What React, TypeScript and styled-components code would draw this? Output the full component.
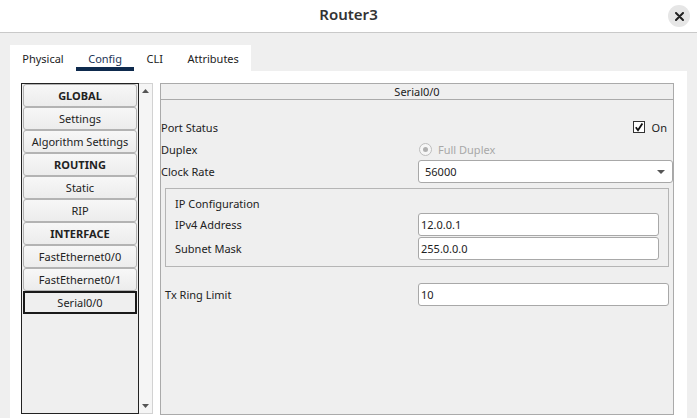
import React from 'react';
import styled, { createGlobalStyle } from 'styled-components';

const Global = createGlobalStyle`
  html, body { margin: 0; padding: 0; }
  body {
    background: #efefef;
    font-family: "Noto Sans", "Open Sans", sans-serif;
    font-size: 11px;
    color: #222;
  }
  * { box-sizing: border-box; }
`;

const Window = styled.div`
  width: 697px;
  height: 418px;
  display: flex;
  flex-direction: column;
  background: #efefef;
  overflow: hidden;
`;

const TitleBar = styled.header`
  height: 33px;
  flex: none;
  background: #fff;
  border-bottom: 1px solid #c9c9c9;
  display: grid;
  grid-template-columns: 1fr auto 1fr;
  align-items: center;
  padding: 0 7px 5px;
`;

const Title = styled.h1`
  grid-column: 2;
  margin: 0;
  font-size: 15px;
  font-weight: 600;
  color: #333;
  line-height: 20px;
`;

const CloseButton = styled.button`
  grid-column: 3;
  justify-self: end;
  width: 22px;
  height: 22px;
  border-radius: 50%;
  border: none;
  background: #e6e6e6;
  display: flex;
  align-items: center;
  justify-content: center;
  padding: 0;
  margin-top: 5px;
`;

const Body = styled.div`
  flex: 1;
  display: flex;
  flex-direction: column;
  padding: 12px 10px 0;
  min-height: 0;
`;

const TabBar = styled.nav`
  align-self: flex-start;
  display: flex;
  background: #fff;
  height: 26px;
`;

const Tab = styled.div<{ $active?: boolean }>`
  padding: 4px 12.25px 0;
  display: flex;
  align-items: center;
  height: 100%;
  color: ${(p) => (p.$active ? '#1d3557' : '#222')};
  border-bottom: 4px solid ${(p) => (p.$active ? '#0e2a4d' : 'transparent')};
`;

const Page = styled.div`
  flex: 1;
  background: #fff;
  display: flex;
  padding: 12px 13px 3px 11px;
  min-height: 0;
`;

const Sidebar = styled.div`
  display: flex;
  margin-right: 7px;
  margin-bottom: 1px;
`;

const ListBox = styled.div`
  width: 118px;
  border: 1px solid #222;
  background: #efefef;
  padding: 0 1px;
  display: flex;
  flex-direction: column;
`;

const ListItem = styled.div<{ $header?: boolean; $selected?: boolean }>`
  height: 23px;
  display: flex;
  align-items: center;
  justify-content: center;
  font-weight: ${(p) => (p.$header ? 700 : 400)};
  border: ${(p) => (p.$selected ? '2px solid #1a1a1a' : '1px solid #b3b3b3')};
  border-radius: ${(p) => (p.$selected ? '0' : '3px')};
  background: ${(p) => (p.$selected ? '#efefef' : 'linear-gradient(#f7f7f7, #ececec)')};
  color: #222;
  white-space: nowrap;
`;

const ScrollBar = styled.div`
  width: 14px;
  background: #f5f5f5;
  border: 1px solid #d2d2d2;
  border-left: none;
  display: flex;
  flex-direction: column;
  justify-content: space-between;
`;

const ScrollArrow = styled.div`
  height: 14px;
  display: flex;
  align-items: center;
  justify-content: center;
`;

const Detail = styled.section`
  flex: 1;
  border: 1px solid #aaa;
  background: #efefef;
  display: flex;
  flex-direction: column;
`;

const DetailHeader = styled.div`
  height: 16px;
  border-bottom: 1px solid #aaa;
  text-align: center;
  line-height: 15px;
  color: #222;
`;

const DetailContent = styled.div`
  padding-top: 16px;
  display: flex;
  flex-direction: column;
`;

const FormRow = styled.div<{ $labelWidth: number; $height?: number }>`
  display: grid;
  grid-template-columns: ${(p) => p.$labelWidth}px 1fr;
  align-items: center;
  height: ${(p) => p.$height ?? 22}px;
`;

const Label = styled.span`
  color: #222;
  white-space: nowrap;
`;

const CheckWrap = styled.div`
  justify-self: end;
  display: flex;
  align-items: center;
  gap: 7px;
  padding-right: 6px;
`;

const CheckBox = styled.span`
  width: 12px;
  height: 12px;
  background: #fff;
  border: 1px solid #333;
  display: flex;
  align-items: center;
  justify-content: center;
`;

const RadioWrap = styled.div`
  display: flex;
  align-items: center;
  gap: 6px;
  color: #a8a8a8;
  padding-left: 1px;
`;

const Radio = styled.span`
  width: 13px;
  height: 13px;
  border-radius: 50%;
  border: 1px solid #bdbdbd;
  background: #f6f6f6;
  display: flex;
  align-items: center;
  justify-content: center;
  &::after {
    content: '';
    width: 5px;
    height: 5px;
    border-radius: 50%;
    background: #b0b0b0;
  }
`;

const Select = styled.div`
  height: 23px;
  background: #fff;
  border: 1px solid #a8a8a8;
  border-radius: 3px;
  display: flex;
  align-items: center;
  justify-content: space-between;
  padding: 0 7px 0 6px;
  color: #222;
`;

const TextInput = styled.input`
  height: 23px;
  width: 100%;
  background: #fff;
  border: 1px solid #a8a8a8;
  border-radius: 3px;
  padding: 0 2px;
  font-family: inherit;
  font-size: 11px;
  color: #222;
  outline: none;
`;

const Group = styled.fieldset`
  margin: 5px 4px 0;
  border: 1px solid #b5b5b5;
  padding: 7px 9px 6px;
  display: flex;
  flex-direction: column;
  gap: 1px;
  min-width: 0;
`;

const GroupTitle = styled.div`
  height: 16px;
  line-height: 16px;
  color: #222;
`;

const Spaced = styled.div`
  margin-top: 16px;
  padding: 0 4px;
`;

const sections: { label: string; header?: boolean; selected?: boolean }[] = [
  { label: 'GLOBAL', header: true },
  { label: 'Settings' },
  { label: 'Algorithm Settings' },
  { label: 'ROUTING', header: true },
  { label: 'Static' },
  { label: 'RIP' },
  { label: 'INTERFACE', header: true },
  { label: 'FastEthernet0/0' },
  { label: 'FastEthernet0/1' },
  { label: 'Serial0/0', selected: true },
];

export default function App() {
  return (
    <>
      <Global />
      <Window>
        <TitleBar>
          <Title>Router3</Title>
          <CloseButton aria-label="Close">
            <svg width="9" height="9" viewBox="0 0 9 9">
              <path d="M1 1 L8 8 M8 1 L1 8" stroke="#222" strokeWidth="2" strokeLinecap="round" />
            </svg>
          </CloseButton>
        </TitleBar>
        <Body>
          <TabBar>
            <Tab>Physical</Tab>
            <Tab $active>Config</Tab>
            <Tab>CLI</Tab>
            <Tab>Attributes</Tab>
          </TabBar>
          <Page>
            <Sidebar>
              <ListBox>
                {sections.map((s) => (
                  <ListItem key={s.label} $header={s.header} $selected={s.selected}>
                    {s.label}
                  </ListItem>
                ))}
              </ListBox>
              <ScrollBar>
                <ScrollArrow>
                  <svg width="7" height="4" viewBox="0 0 7 4">
                    <path d="M0 4 L3.5 0 L7 4 Z" fill="#555" />
                  </svg>
                </ScrollArrow>
                <ScrollArrow>
                  <svg width="7" height="4" viewBox="0 0 7 4">
                    <path d="M0 0 L3.5 4 L7 0 Z" fill="#555" />
                  </svg>
                </ScrollArrow>
              </ScrollBar>
            </Sidebar>
            <Detail>
              <DetailHeader>Serial0/0</DetailHeader>
              <DetailContent>
                <FormRow $labelWidth={257}>
                  <Label>Port Status</Label>
                  <CheckWrap>
                    <CheckBox>
                      <svg width="10" height="10" viewBox="0 0 10 10">
                        <path d="M1.8 5.2 L4 8.2 L8.4 1.4" stroke="#111" strokeWidth="1.8" fill="none" />
                      </svg>
                    </CheckBox>
                    <span>On</span>
                  </CheckWrap>
                </FormRow>
                <FormRow $labelWidth={257}>
                  <Label>Duplex</Label>
                  <RadioWrap>
                    <Radio />
                    <span>Full Duplex</span>
                  </RadioWrap>
                </FormRow>
                <FormRow $labelWidth={257} $height={23}>
                  <Label>Clock Rate</Label>
                  <Select>
                    <span>56000</span>
                    <svg width="8" height="4" viewBox="0 0 8 4">
                      <path d="M0 0 L4 4 L8 0 Z" fill="#555" />
                    </svg>
                  </Select>
                </FormRow>
                <Group>
                  <GroupTitle>IP Configuration</GroupTitle>
                  <FormRow $labelWidth={243} $height={23}>
                    <Label>IPv4 Address</Label>
                    <TextInput readOnly value="12.0.0.1" />
                  </FormRow>
                  <FormRow $labelWidth={243} $height={23}>
                    <Label>Subnet Mask</Label>
                    <TextInput readOnly value="255.0.0.0" />
                  </FormRow>
                </Group>
                <Spaced>
                  <FormRow $labelWidth={253} $height={23}>
                    <Label>Tx Ring Limit</Label>
                    <TextInput readOnly value="10" />
                  </FormRow>
                </Spaced>
              </DetailContent>
            </Detail>
          </Page>
        </Body>
      </Window>
    </>
  );
}
